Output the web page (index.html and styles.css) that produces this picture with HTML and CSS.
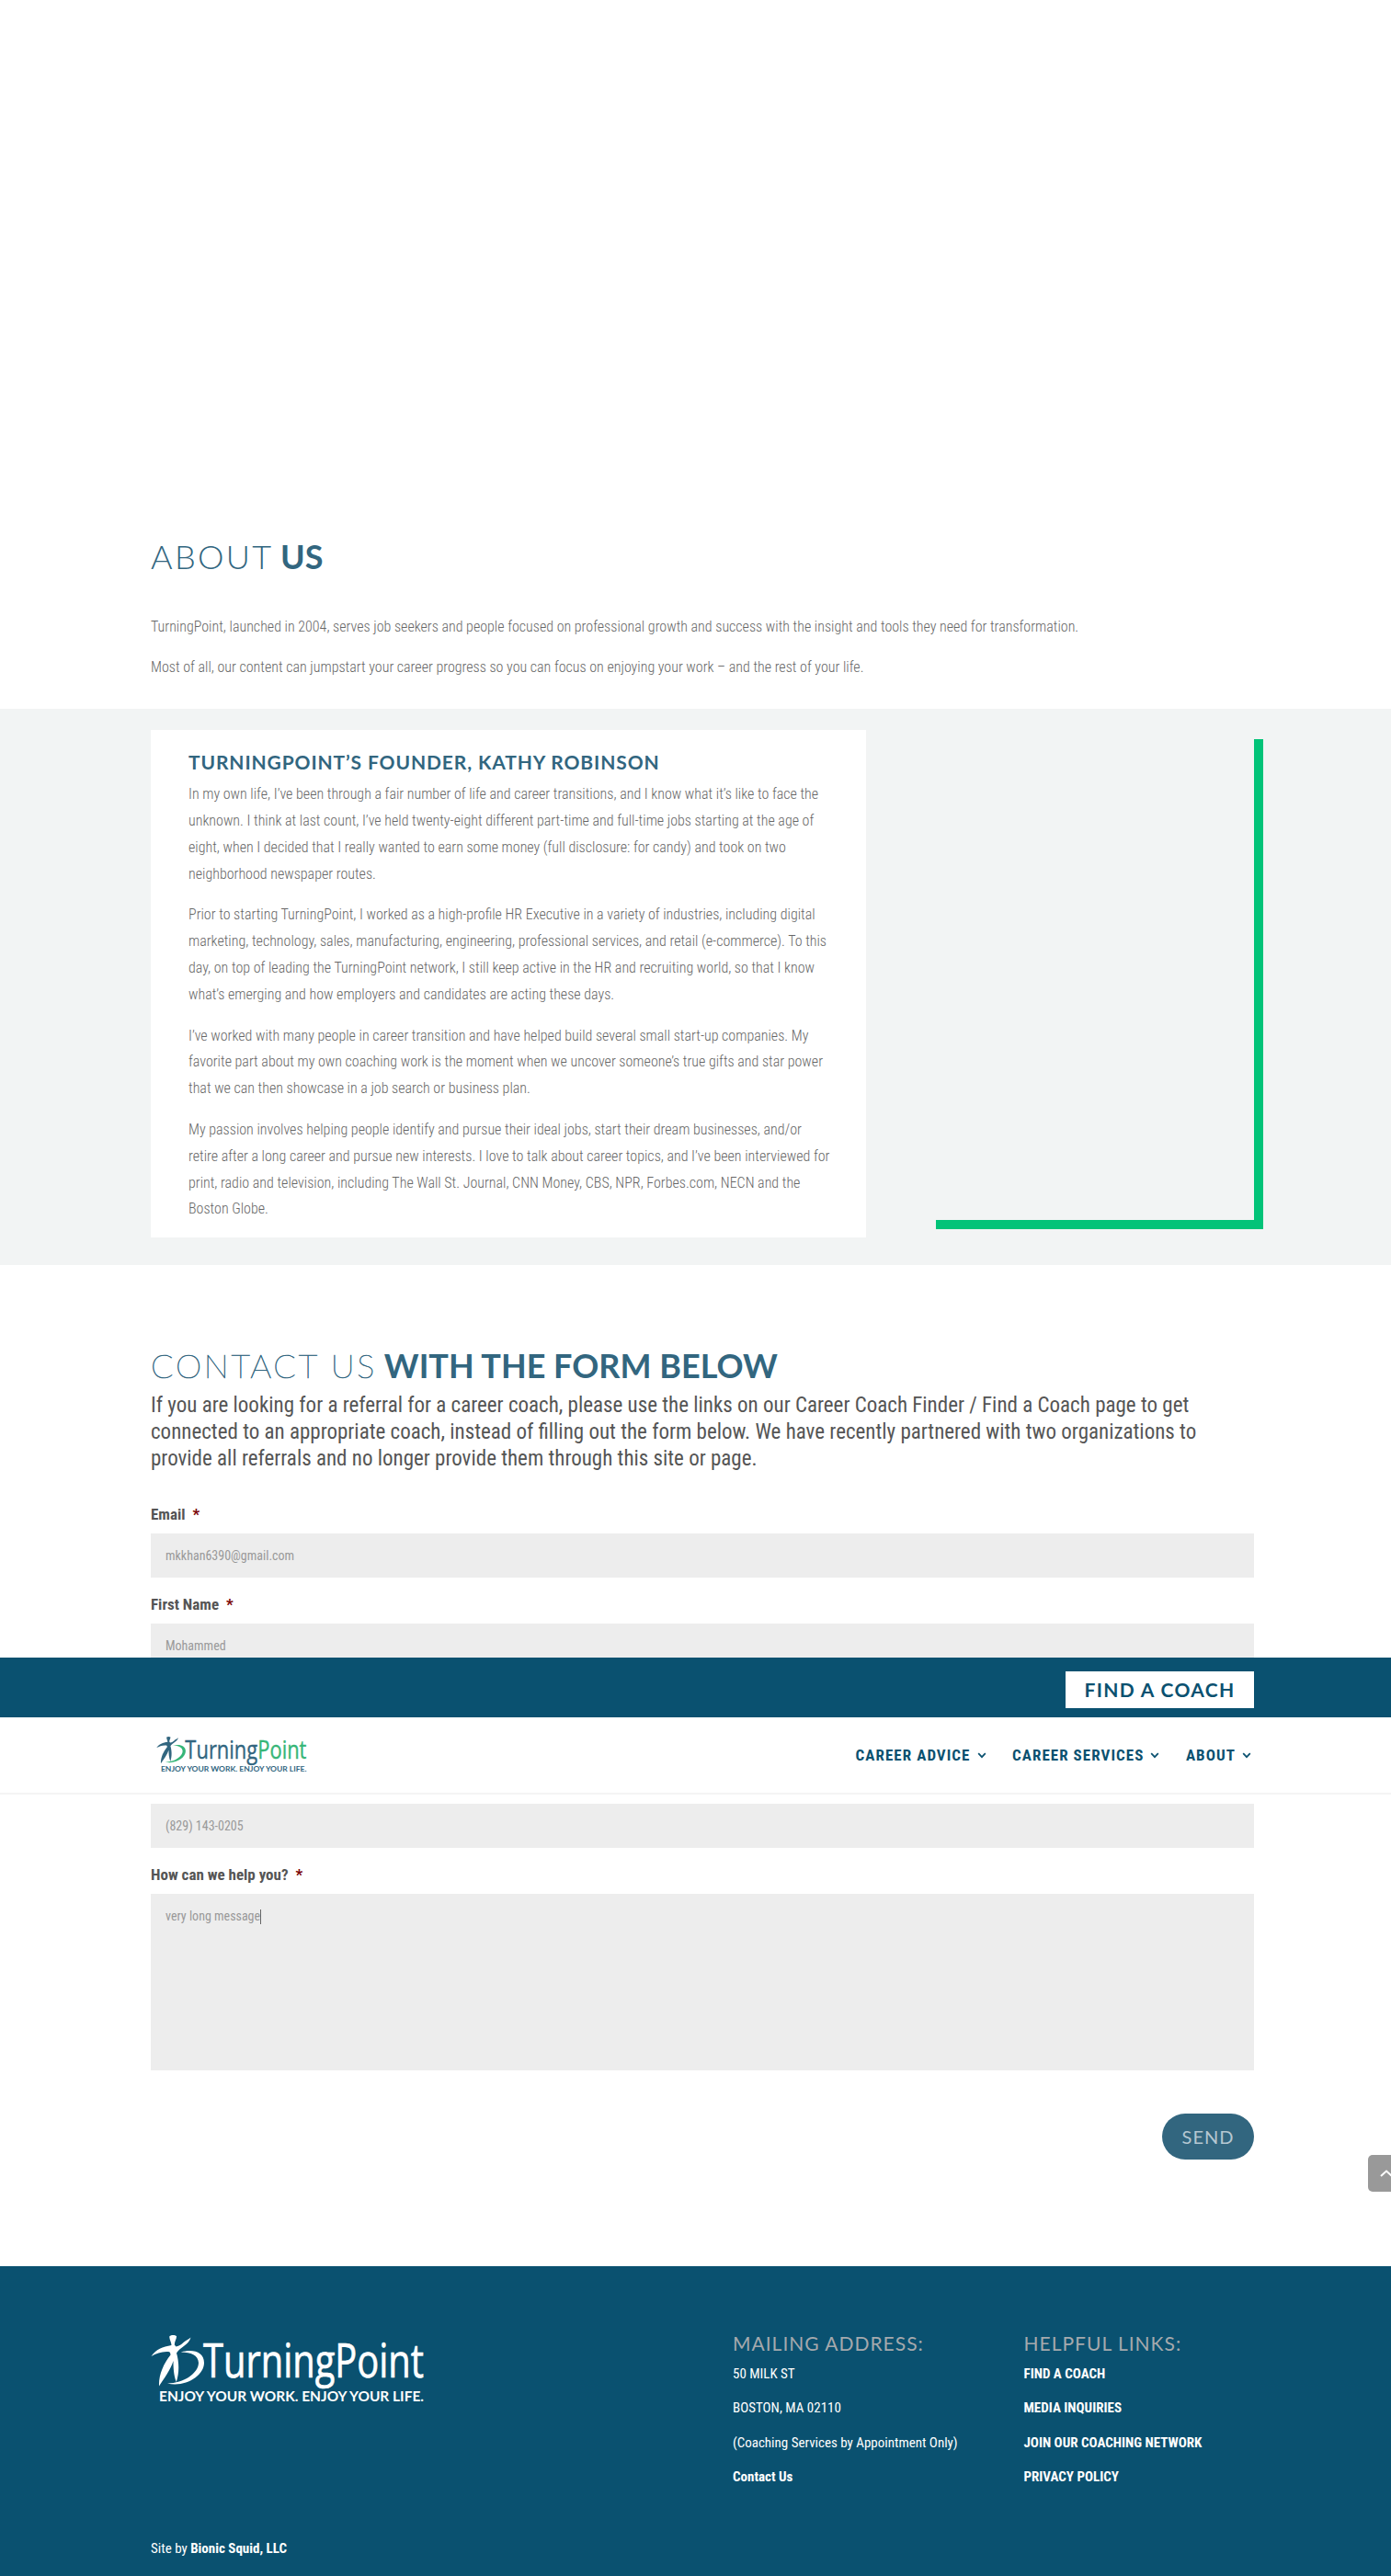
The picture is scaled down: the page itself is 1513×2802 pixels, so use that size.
FILE: index.html
```html
<!DOCTYPE html>
<html lang="en">
<head>
<meta charset="utf-8">
<title>About Us – TurningPoint</title>
<link rel="stylesheet" href="styles.css">
</head>
<body>
<svg class="defs" aria-hidden="true">
  <symbol id="figure" viewBox="0 0 60 58" preserveAspectRatio="none">
    <path class="ink" d="M20.500 3C22 1.500 26.500 1.500 28 3C28.300 6 26 8.500 25.800 12.500L27.500 14.500C31 13.500 33.500 12 35.500 10C38 7.500 41 7 43.500 4.500C42.500 8.500 39.500 11.500 36.500 13.500C33 16 30 18.500 28 21.500C30.500 30 31.500 42 27.800 53C24.800 46 24.500 36 24.500 30C21.500 40 14.500 49 9 57.500C8.500 45 14 33 21.500 23.500C21.500 21 20.500 20 19 20C12 19.500 6 22 0.500 25C5.500 17.500 13 14.500 22.500 13C22.500 9.500 19.500 6 20.500 3Z"/>
    <path class="swoosh" d="M32.700 20.500C46 16.500 58 20.500 58 32C58 46 38 59 18 54.500C36 54.500 52 43 52 32C51.500 24 44 20.500 32.700 20.500Z"/>
  </symbol>
</svg>
<main>
  <section class="about wrap">
    <h1 class="title"><span class="thin">ABOUT</span> <strong>US</strong></h1>
    <p>TurningPoint, launched in 2004, serves job seekers and people focused on professional growth and success with the insight and tools they need for transformation.</p>
    <p>Most of all, our content can jumpstart your career progress so you can focus on enjoying your work – and the rest of your life.</p>
  </section>
  <section class="founder">
    <div class="wrap founder-row">
      <article class="card">
        <h2>TURNINGPOINT’S FOUNDER, KATHY ROBINSON</h2>
        <p>In my own life, I’ve been through a fair number of life and career transitions, and I know what it’s like to face the<br>unknown. I think at last count, I’ve held twenty-eight different part-time and full-time jobs starting at the age of<br>eight, when I decided that I really wanted to earn some money (full disclosure: for candy) and took on two<br>neighborhood newspaper routes.</p>
        <p>Prior to starting TurningPoint, I worked as a high-profile HR Executive in a variety of industries, including digital<br>marketing, technology, sales, manufacturing, engineering, professional services, and retail (e-commerce). To this<br>day, on top of leading the TurningPoint network, I still keep active in the HR and recruiting world, so that I know<br>what’s emerging and how employers and candidates are acting these days.</p>
        <p>I’ve worked with many people in career transition and have helped build several small start-up companies. My<br>favorite part about my own coaching work is the moment when we uncover someone’s true gifts and star power<br>that we can then showcase in a job search or business plan.</p>
        <p>My passion involves helping people identify and pursue their ideal jobs, start their dream businesses, and/or<br>retire after a long career and pursue new interests. I love to talk about career topics, and I’ve been interviewed for<br>print, radio and television, including The Wall St. Journal, CNN Money, CBS, NPR, Forbes.com, NECN and the<br>Boston Globe.</p>
      </article>
      <div class="portrait"></div>
    </div>
  </section>
  <section class="contact wrap">
    <h2 class="title"><span class="hair">CONTACT US</span> <strong>WITH THE FORM BELOW</strong></h2>
    <p class="lead">If you are looking for a referral for a career coach, please use the links on our Career Coach Finder / Find a Coach page to get<br>connected to an appropriate coach, instead of filling out the form below. We have recently partnered with two organizations to<br>provide all referrals and no longer provide them through this site or page.</p>
    <div class="form">
      <div class="label">Email <i>*</i></div>
      <div class="field">mkkhan6390@gmail.com</div>
      <div class="label">First Name <i>*</i></div>
      <div class="field first">Mohammed</div>
      <div class="field">(829) 143-0205</div>
      <div class="label">How can we help you? <i>*</i></div>
      <div class="field area">very long message<span class="caret"></span></div>
      <div class="actions"><a class="send">SEND</a></div>
    </div>
  </section>
</main>
<footer class="footer">
  <div class="wrap footer-cols">
    <div class="footer-brand">
      <svg class="logo logo-light" viewBox="0 0 298 74" preserveAspectRatio="none">
        <use href="#figure" x="0" y="-2" width="60" height="58"/>
        <text class="word" x="57" y="45.500" textLength="240" lengthAdjust="spacingAndGlyphs">TurningPoint</text>
        <text class="tag" x="9" y="72" textLength="288" lengthAdjust="spacingAndGlyphs">ENJOY YOUR WORK. ENJOY YOUR LIFE.</text>
      </svg>
    </div>
    <div class="col address">
      <h4>MAILING ADDRESS:</h4>
      <p>50 MILK ST</p>
      <p>BOSTON, MA 02110</p>
      <p>(Coaching Services by Appointment Only)</p>
      <p><b>Contact Us</b></p>
    </div>
    <div class="col links">
      <h4>HELPFUL LINKS:</h4>
      <p><b>FIND A COACH</b></p>
      <p><b>MEDIA INQUIRIES</b></p>
      <p><b>JOIN OUR COACHING NETWORK</b></p>
      <p><b>PRIVACY POLICY</b></p>
    </div>
  </div>
  <div class="wrap credit">Site by <b>Bionic Squid, LLC</b></div>
</footer>
<header class="header">
  <div class="topbar"><div class="wrap topbar-in"><a class="cta">FIND A COACH</a></div></div>
  <div class="navbar"><div class="wrap nav-in">
    <svg class="logo logo-color" viewBox="0 0 298 74" preserveAspectRatio="none">
      <use href="#figure" x="0" y="-2" width="60" height="58"/>
      <text class="word" x="57" y="45.500" textLength="240" lengthAdjust="spacingAndGlyphs">Turning<tspan class="green">Point</tspan></text>
      <text class="tag" x="9" y="72" textLength="288" lengthAdjust="spacingAndGlyphs">ENJOY YOUR WORK. ENJOY YOUR LIFE.</text>
    </svg>
    <nav class="nav">
      <a>CAREER ADVICE<svg viewBox="0 0 10 7"><path d="M1.200 1.200L5 5.200L8.800 1.200"/></svg></a>
      <a>CAREER SERVICES<svg viewBox="0 0 10 7"><path d="M1.200 1.200L5 5.200L8.800 1.200"/></svg></a>
      <a>ABOUT<svg viewBox="0 0 10 7"><path d="M1.200 1.200L5 5.200L8.800 1.200"/></svg></a>
    </nav>
  </div></div>
</header>
<a class="to-top"><svg viewBox="0 0 16 10"><path d="M2 8L8 2.500L14 8"/></svg></a>
</body>
</html>
```
FILE: styles.css
```css
* { box-sizing: border-box; }
body {
  margin: 0;
  position: relative;
  background: #fff;
  color: #666;
  font: 300 16px/28.8px "Roboto Condensed", Roboto, sans-serif;
}
h1, h2, h4, p { margin: 0; }
.defs { display: block; width: 0; height: 0; }
.wrap { width: 1200px; margin-left: 164px; }

.title {
  font: 400 36px/36px Lato, sans-serif;
  color: #32667f;
  letter-spacing: -1.5px;
}
.title strong { font-weight: 700; letter-spacing: 0; }
.thin { font-weight: 300; letter-spacing: 2.3px; }
.hair { font-weight: 100; letter-spacing: 2.7px; -webkit-text-stroke: 0.7px #32667f; }

.about { height: 771px; padding-top: 587px; }
.about p { margin-bottom: 15.5px; white-space: nowrap; }
.about .title { margin-bottom: 44.8px; }

.founder { background: #f2f4f4; height: 605px; padding-top: 23px; }
.founder-row { display: flex; }
.card { flex: none; width: 778px; height: 552px; background: #fff; padding: 22px 0 0 41px; white-space: nowrap; }
.card h2 { margin-bottom: 8.3px; font: 700 21px/26px Lato, sans-serif; letter-spacing: 0.88px; color: #32667f; }
.card p { margin-bottom: 16px; }
.portrait {
  flex: none;
  width: 356px;
  height: 533px;
  margin: 10px 0 0 76px;
  border: solid #02c378;
  border-width: 0 10px 10px 0;
}

.contact { height: 1089px; padding-top: 91px; }
.lead { margin-top: 12px; font-weight: 400; font-size: 23px; line-height: 28.8px; color: #555; white-space: nowrap; }
.form { margin-top: 32.6px; }
.label { height: 34px; line-height: 27px; font-weight: 700; font-size: 17px; color: #555; }
.label i { font-style: normal; color: #790000; margin-left: 4px; }
.field { height: 48px; margin-bottom: 16px; background: #ededed; padding: 0 16px; font-weight: 400; font-size: 14px; line-height: 48px; color: #999; }
.first { margin-bottom: 148px; }
.area { height: 192px; margin-bottom: 47px; }
.caret { display: inline-block; width: 1px; height: 16px; background: #666; vertical-align: middle; }
.actions { display: flex; justify-content: flex-end; }
.send {
  width: 100px;
  height: 50px;
  border-radius: 25px;
  background: #32667f;
  color: #b5c7d1;
  font: 400 20px/51px Lato, sans-serif;
  letter-spacing: 1px;
  text-align: center;
}

.footer { background: #0a5170; color: #fff; height: 337px; padding-top: 75px; font-weight: 400; font-size: 15px; }
.footer-cols { display: flex; height: 220px; }
.footer-brand { width: 633px; }
.logo { display: block; flex: none; overflow: visible; font-family: "Open Sans", sans-serif; font-weight: 400; }
.logo .word { font-size: 52px; stroke-width: 0.7px; }
.logo .tag { font: 700 15px Lato, sans-serif; }
.logo-light { width: 298px; height: 74px; fill: #fff; }
.logo-light .word { stroke: #fff; }
.col { margin-top: -4px; }
.col h4 { margin-bottom: 7.5px; font: 400 21px/26px Lato, sans-serif; letter-spacing: 1px; color: #a5a9ad; }
.col p { height: 37.5px; line-height: 25px; white-space: nowrap; }
.address { width: 316.5px; }
.credit { line-height: 25px; }

.header { position: absolute; top: 1803px; left: 0; width: 100%; }
.topbar { height: 65px; background: #0a5170; }
.topbar-in { display: flex; justify-content: flex-end; padding-top: 15px; }
.cta {
  height: 40px;
  width: 205px;
  background: #fff;
  color: #0a5170;
  font: 700 21px/40px Lato, sans-serif;
  letter-spacing: 1.35px;
  text-align: center;
}
.navbar { height: 84px; background: #fff; border-bottom: 2px solid #f4f4f4; }
.nav-in { display: flex; justify-content: space-between; padding: 21px 3px 0 6px; }
.logo-color { --swoosh: #36b677; width: 164px; height: 39px; fill: #32667f; }
.logo-color .word { stroke: #32667f; }
.logo-color .word .green { fill: #36b677; stroke: #36b677; }
.swoosh { fill: var(--swoosh, #fff); }
.nav { display: flex; gap: 28.5px; padding-top: 6px; }
.nav a { display: flex; align-items: center; height: 28px; gap: 7px; font-weight: 700; font-size: 17px; letter-spacing: 1.05px; color: #0a5170; }
.nav svg { width: 10px; height: 7px; fill: none; stroke: #0a5170; stroke-width: 1.7; }

.to-top {
  position: absolute;
  top: 2344px;
  right: 0;
  width: 25px;
  height: 40px;
  padding: 15px 0 0 12px;
  overflow: hidden;
  background: #999;
  border-radius: 5px 0 0 5px;
}
.to-top svg { display: block; width: 16px; height: 10px; fill: none; stroke: #fff; stroke-width: 2; }
```
